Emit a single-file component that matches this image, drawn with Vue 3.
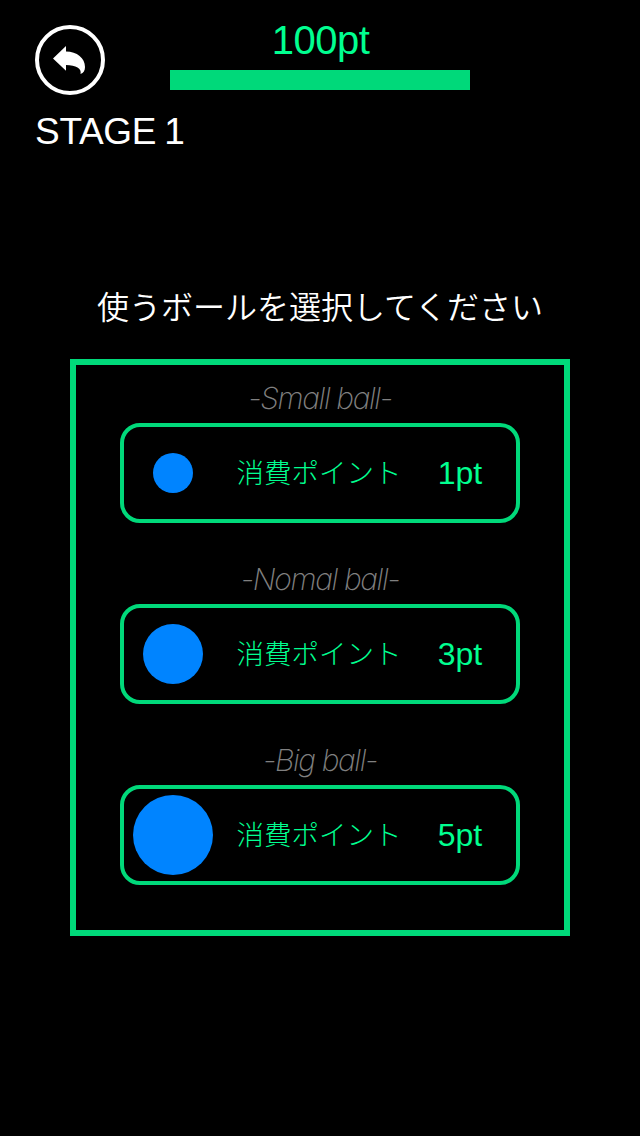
<script setup>
import { ref } from "vue";

const stage = ref(1);
const points = ref(100);
const maxPoints = 100;

const balls = [
    { name: "Small", size: 40, cost: 1 },
    { name: "Nomal", size: 60, cost: 3 },
    { name: "Big", size: 80, cost: 5 },
];
</script>
<template>
    <main class="game">
        <header class="header">
            <button class="back" aria-label="back">
                <svg class="back__icon" viewBox="0 0 70 70">
                    <circle cx="35" cy="35" r="33" fill="none" stroke="white" stroke-width="4" />
                    <path
                        d="M18 33.5 L31 21 V26.5 C42 26.5 50 33 50 42 C50 45.5 48.5 48 45.5 49 C47 43 41 40.5 31 40 V45.8 Z"
                        fill="white"
                    />
                </svg>
            </button>
            <div class="points">
                <span class="points__text">{{ points }}pt</span>
                <div class="points__track">
                    <div class="points__bar" :style="{ width: (points / maxPoints) * 100 + '%' }"></div>
                </div>
            </div>
        </header>
        <h1 class="stage">STAGE {{ stage }}</h1>
        <p class="message">使うボールを選択してください</p>
        <section class="panel">
            <div class="ball" v-for="ball of balls" :key="ball.name">
                <span class="ball__name">-{{ ball.name }} ball-</span>
                <button class="ball__button">
                    <span class="ball__slot">
                        <span
                            class="ball__circle"
                            :style="{ width: ball.size + 'px', height: ball.size + 'px' }"
                        ></span>
                    </span>
                    <span class="ball__label">消費ポイント</span>
                    <span class="ball__cost">{{ ball.cost }}pt</span>
                </button>
            </div>
        </section>
    </main>
</template>
<style>
body {
    margin: 0;
    background-color: black;
}
</style>
<style scoped>
.game {
    box-sizing: border-box;
    width: 640px;
    height: 1136px;
    padding-top: 18px;
    background-color: black;
    color: white;
    font-family: "Liberation Sans", "Noto Sans CJK JP", sans-serif;
    overflow: hidden;
}

.header {
    display: flex;
    gap: 65px;
    padding-left: 35px;
    height: 77px;
}

.back {
    width: 70px;
    height: 70px;
    margin-top: 7px;
    padding: 0;
    border: none;
    background: none;
}

.back__icon {
    display: block;
    width: 70px;
    height: 70px;
}

.points {
    width: 300px;
}

.points__text {
    display: block;
    height: 52px;
    line-height: 45px;
    font-size: 40px;
    letter-spacing: -0.5px;
    text-indent: 1px;
    text-align: center;
    color: #00ff90;
}

.points__bar {
    height: 20px;
    background-color: #00d97a;
}

.stage {
    margin: 16px 0 0 35px;
    height: 42px;
    line-height: 42px;
    font-size: 37px;
    font-weight: 400;
    letter-spacing: -0.3px;
    word-spacing: -2px;
}

.message {
    margin: 128px 0 0;
    height: 48px;
    line-height: 48px;
    font-family: "Noto Sans CJK JP", sans-serif;
    font-size: 32px;
    font-weight: 350;
    text-align: center;
}

.panel {
    box-sizing: border-box;
    width: 500px;
    height: 577px;
    margin: 30px auto 0;
    padding-top: 16px;
    border: 6px solid #00d97a;
    display: flex;
    flex-direction: column;
    align-items: center;
    gap: 39px;
}

.ball {
    width: 400px;
}

.ball__name {
    display: block;
    height: 42px;
    line-height: 35px;
    font-family: Inter, sans-serif;
    font-size: 30px;
    font-style: italic;
    font-weight: 160;
    letter-spacing: -1.4px;
    text-align: center;
    color: #808080;
}

.ball__button {
    box-sizing: border-box;
    display: grid;
    grid-template-columns: 98px 194px 92px;
    align-items: center;
    width: 400px;
    height: 100px;
    padding: 0;
    border: 4px solid #00d97a;
    border-radius: 20px;
    background: none;
    color: #00ff90;
    font-family: inherit;
}

.ball__slot {
    display: flex;
    justify-content: center;
}

.ball__circle {
    border-radius: 50%;
    background-color: #0084ff;
}

.ball__label {
    padding-bottom: 5px;
    font-family: "Noto Sans CJK JP", sans-serif;
    font-size: 27.5px;
    font-weight: 300;
    text-align: center;
}

.ball__cost {
    padding-right: 4px;
    font-size: 32px;
    text-align: center;
}
</style>
